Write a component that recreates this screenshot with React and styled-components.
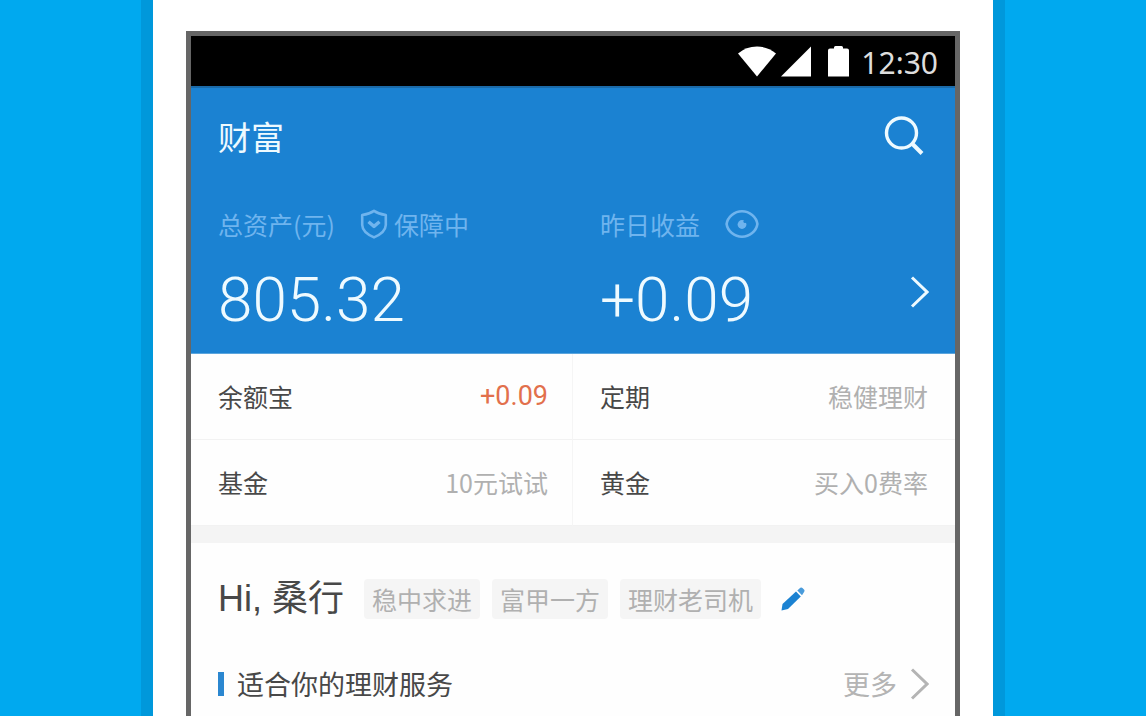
import React from 'react';
import styled, { createGlobalStyle } from 'styled-components';

const tiles = [
    { id: 1, name: '余额宝', note: '+0.09', up: true },
    { id: 2, name: '定期', note: '稳健理财' },
    { id: 3, name: '基金', note: '10元试试' },
    { id: 4, name: '黄金', note: '买入0费率' },
]
const tags = ['稳中求进', '富甲一方', '理财老司机']

const Chevron = () => (
    <svg width="20" height="34" viewBox="0 0 20 34" fill="none" stroke="currentColor" strokeWidth="3" aria-hidden="true">
        <path d="M3 2.5 L18 17 L3 31.5" />
    </svg>
)

const StatusBar = () => (
    <Status>
        <svg width="38" height="31" viewBox="0 0 38 31" fill="#fff" aria-hidden="true">
            <path d="M0 7.5 Q8 0.5 19 0.5 Q30 0.5 38 7.5 L19 30.5 Z" />
        </svg>
        <svg width="30" height="31" viewBox="0 0 30 31" fill="#fff" aria-hidden="true">
            <path d="M30 0.5 V30.5 H0 Z" />
        </svg>
        <Battery width="21" height="31" viewBox="0 0 21 31" fill="#fff" aria-hidden="true">
            <path d="M6 1.5 Q6 0 7.5 0 H13.5 Q15 0 15 1.5 V2.5 H19 Q21 2.5 21 4.5 V30.5 H0 V4.5 Q0 2.5 2 2.5 H6 Z" />
        </Battery>
        <Clock>12:30</Clock>
    </Status>
)

const App = () => (
    <Page>
        <GlobalStyle />
        <Sheet>
            <Phone>
                <StatusBar />
                <Hero>
                    <TitleRow>
                        <Title>财富</Title>
                        <IconButton type="button" aria-label="搜索">
                            <svg width="40" height="40" viewBox="0 0 40 40" fill="none" stroke="#eefaff" strokeWidth="3.4">
                                <circle cx="17.5" cy="17" r="15" />
                                <path d="M28.5 28 L38 37.5" strokeWidth="4" />
                            </svg>
                        </IconButton>
                    </TitleRow>
                    <Halves>
                        <Half>
                            <Label>
                                <span>总资产(元)</span>
                                <Guard>
                                    <svg width="28" height="30" viewBox="0 0 28 30" fill="none" stroke="currentColor" strokeWidth="2.6" strokeLinejoin="round" aria-hidden="true">
                                        <path d="M14 1.8 Q18.5 4.8 25.8 6 V16 Q25.5 23.5 14 28.4 Q2.5 23.5 2.2 16 V6 Q9.5 4.8 14 1.8 Z" />
                                        <path d="M8.5 12.8 L14 17.4 L19.5 12.8" strokeWidth="3.4" />
                                    </svg>
                                    保障中
                                </Guard>
                            </Label>
                            <AmountRow>
                                <Amount>805.32</Amount>
                            </AmountRow>
                        </Half>
                        <Half>
                            <Label>
                                <span>昨日收益</span>
                                <IconButton type="button" aria-label="隐藏金额">
                                    <svg width="34" height="30" viewBox="0 0 34 30" fill="none" stroke="currentColor" strokeWidth="2.6">
                                        <path d="M1.6 15 C2.6 8 9.5 2.2 17 2.2 C24.5 2.2 31.4 8 32.4 15 C31.4 22 24.5 27.8 17 27.8 C9.5 27.8 2.6 22 1.6 15 Z" />
                                        <circle cx="17" cy="15.5" r="4.4" fill="currentColor" stroke="none" />
                                        <circle cx="20" cy="12.4" r="1.6" fill="#1b82d2" stroke="none" />
                                    </svg>
                                </IconButton>
                            </Label>
                            <AmountRow>
                                <Amount>+0.09</Amount>
                                <DetailLink href="#detail" aria-label="收益详情"><Chevron /></DetailLink>
                            </AmountRow>
                        </Half>
                    </Halves>
                </Hero>
                <Tiles>
                    {tiles.map((tile) => (
                        <Tile key={tile.id} href={'#tile-' + tile.id}>
                            <span>{tile.name}</span>
                            <Note $up={tile.up}>{tile.note}</Note>
                        </Tile>
                    ))}
                </Tiles>
                <Greeting>
                    <Hello>Hi, 桑行</Hello>
                    <Tags>
                        {tags.map((tag) => <Tag key={tag}>{tag}</Tag>)}
                    </Tags>
                    <IconButton type="button" aria-label="编辑标签">
                        <svg width="24" height="24" viewBox="0 0 24 24" fill="#1b82d2">
                            <path d="M0.5 23.5 L1.5 17 L15 4.5 L19.8 9.5 L7 22 Z" />
                            <path d="M16.3 3.4 L19.3 0.8 Q20.5 0 21.5 1 L23.2 2.8 Q24 3.8 23.2 4.8 L21 8.2 Z" opacity="0.8" />
                        </svg>
                    </IconButton>
                </Greeting>
                <SectionHead>
                    <SectionTitle>适合你的理财服务</SectionTitle>
                    <More href="#more">更多 <Chevron /></More>
                </SectionHead>
            </Phone>
        </Sheet>
    </Page>
)

export default App

//styled component
const GlobalStyle = createGlobalStyle`
* {
    box-sizing: border-box;
}
body {
    margin: 0;
    background: #00a9ef;
    font-family: "Noto Sans CJK SC", sans-serif;
    font-size: 25px;
    line-height: 36px;
    color: #484848;
}
a {
    color: inherit;
    text-decoration: none;
}
svg {
    display: block;
    flex: none;
}
`;
const Page = styled.div`
display: flex;
justify-content: center;
min-height: 100vh;
`;
const Sheet = styled.main`
display: flex;
width: 100%;
max-width: 864px;
padding: 31px 33px 0;
border: solid #0098db;
border-width: 0 12px;
background: #fff;
`;
const Phone = styled.div`
flex: 1;
min-width: 0;
border: 5px solid #666;
border-bottom: none;
background: #fefefe;
`;
const Status = styled.div`
display: flex;
align-items: center;
justify-content: flex-end;
gap: 5px;
height: 50px;
padding: 0 17px;
background: #000;
color: #ddd;
`;
const Battery = styled.svg`
margin: 0 7px 0 12px;
`;
const Clock = styled.time`
padding-top: 4px;
font-family: "Noto Sans", sans-serif;
font-size: 30px;
`;
const Hero = styled.header`
height: 268px;
border-top: 2px solid #1b6aa8;
border-bottom: 1px solid #5ba5dd;
background: #1b82d2;
color: #eefaff;
`;
const TitleRow = styled.div`
display: flex;
align-items: center;
justify-content: space-between;
height: 96px;
padding: 0 31px 0 27px;
`;
const Title = styled.h1`
margin: 0;
font-size: 33px;
font-weight: 400;
`;
const IconButton = styled.button`
padding: 0;
border: none;
background: none;
color: inherit;
cursor: pointer;
`;
const Halves = styled.div`
display: grid;
grid-template-columns: 1fr 1fr;
`;
const Half = styled.section`
padding: 0 26px 0 27px;
`;
const Label = styled.div`
display: flex;
align-items: center;
gap: 25px;
height: 79px;
color: #6fb4ee;
white-space: nowrap;
`;
const Guard = styled.span`
display: flex;
align-items: center;
gap: 6px;
`;
const AmountRow = styled.div`
display: flex;
align-items: center;
justify-content: space-between;
height: 74px;
`;
const Amount = styled.strong`
font-family: Roboto, sans-serif;
font-size: 62px;
font-weight: 300;
line-height: 74px;
`;
const DetailLink = styled.a`
padding-bottom: 16px;
`;
const Tiles = styled.nav`
display: grid;
grid-template-columns: 1fr 1fr;
border-bottom: 17px solid #f4f4f4;
`;
const Tile = styled.a`
display: flex;
align-items: center;
justify-content: space-between;
height: 86px;
padding: 0 27px 1px;
border-bottom: 1px solid #f2f2f2;
&:nth-child(odd) {
    padding-right: 24px;
    border-right: 1px solid #f5f5f5;
}
`;
const Note = styled.span`
color: ${(props) => (props.$up ? '#e2704c' : '#b0b0b0')};
font-family: ${(props) => (props.$up ? 'Roboto, sans-serif' : 'inherit')};
font-size: ${(props) => (props.$up ? '27px' : '25px')};
`;
const Greeting = styled.div`
display: flex;
align-items: center;
gap: 20px;
height: 112px;
padding: 0 27px;
white-space: nowrap;
`;
const Hello = styled.h2`
margin: 0;
font-family: "Liberation Sans", "Noto Sans CJK SC", sans-serif;
font-size: 36px;
font-weight: 400;
`;
const Tags = styled.div`
display: flex;
gap: 12px;
`;
const Tag = styled.span`
padding: 0 8px;
border-radius: 4px;
background: #f5f5f5;
color: #b0b0b0;
line-height: 40px;
`;
const SectionHead = styled.div`
display: flex;
align-items: center;
justify-content: space-between;
height: 58px;
padding: 0 26px 0 27px;
`;
const SectionTitle = styled.h3`
display: flex;
align-items: center;
gap: 13px;
margin: 0;
font-size: 27px;
font-weight: 400;
&::before {
    content: "";
    width: 6px;
    height: 24px;
    background: #2b87d0;
}
`;
const More = styled.a`
display: flex;
align-items: center;
gap: 12px;
color: #b4b4b4;
font-size: 27px;
`;
